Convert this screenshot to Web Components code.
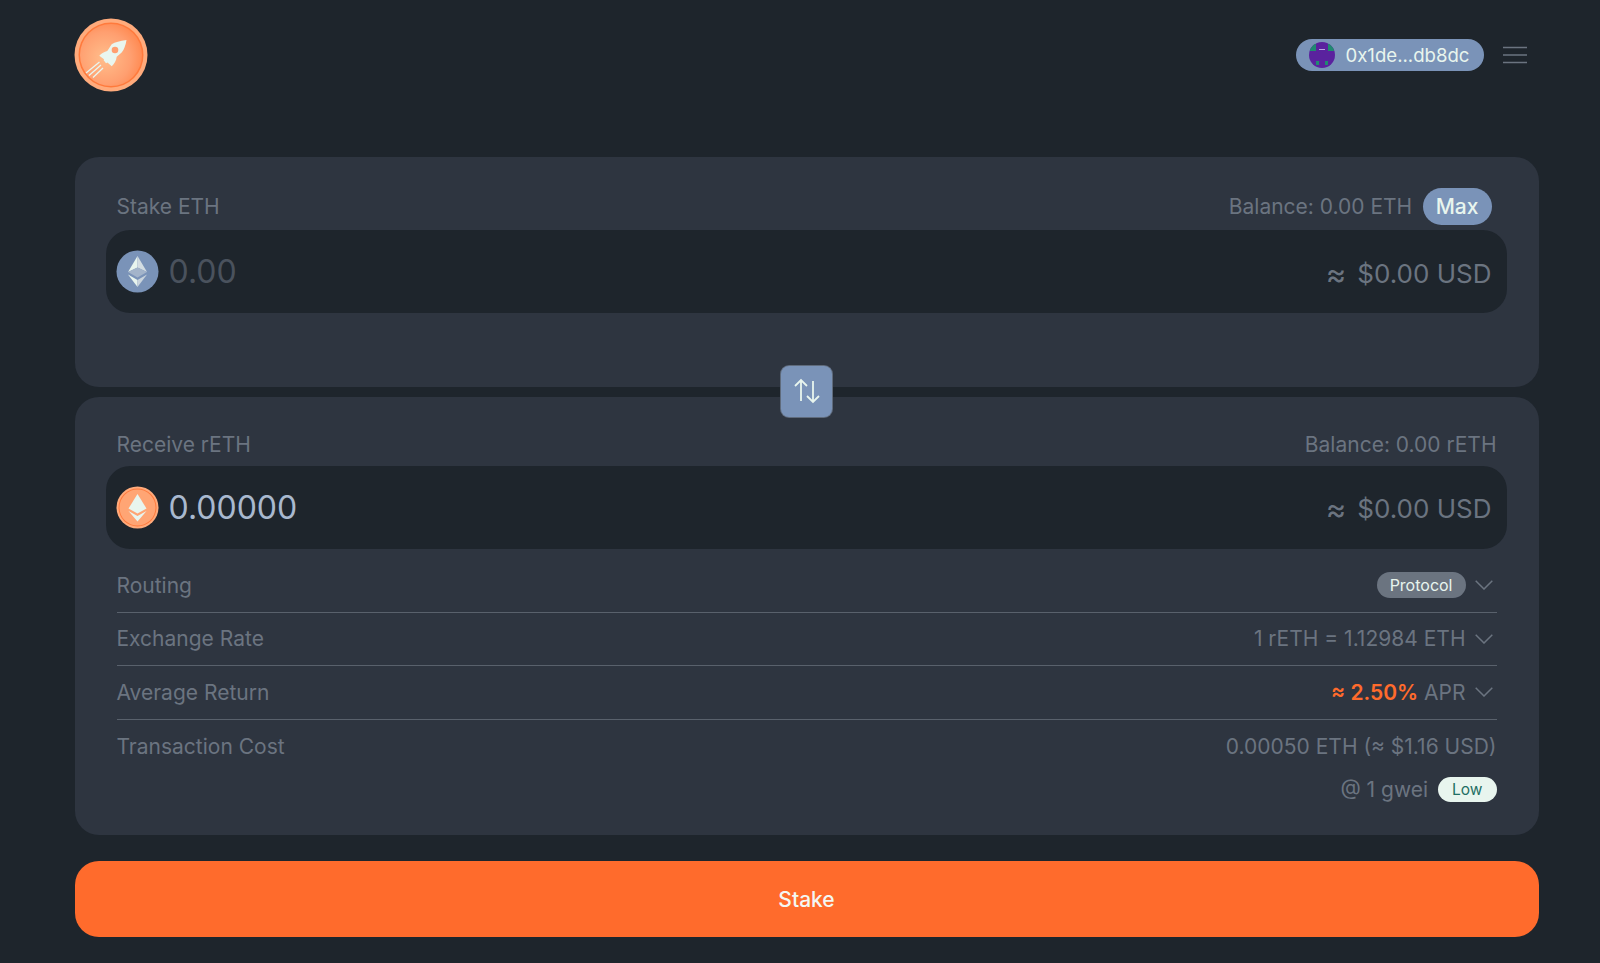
<!DOCTYPE html>
<html lang="en"><head><meta charset="utf-8"><title>Stake</title>
<style>
html,body{margin:0;height:100%;background:#1e252c}
body{font-family:Inter,"Liberation Sans",sans-serif;color:#6b7480}
</style></head>
<body>
<template id="t-app"><style>
:host{display:flex;flex-direction:column;height:963px;box-sizing:border-box;padding:18px 61.500px 0 74.500px;overflow:hidden}
.cards{display:flex;flex-direction:column;gap:10px;position:relative}
.swap{position:absolute;left:50%;top:208.500px;margin-left:-25.500px}
.cta{margin-top:26px}
</style>
<app-header></app-header>
<div class="cards">
<slot></slot>
<swap-button class="swap"></swap-button>
</div>
<cta-button class="cta">Stake</cta-button></template>

<template id="t-header"><style>
:host{display:flex;align-items:center;justify-content:space-between;height:74px;margin-bottom:65px;margin-left:-.5px;padding-right:12px}
.r{display:flex;align-items:center;gap:19px}
.pill{display:flex;align-items:center;gap:10px;height:32px;padding:0 14px 0 13px;border-radius:16px;background:#7a93b8;color:#e8f5ee;font-size:18.600px;box-sizing:border-box}
svg{display:block}
</style>
<svg width="74" height="74" viewBox="0 0 74 74"><defs>
<radialGradient id="g" cx="40%" cy="55%" r="60%"><stop offset="0" stop-color="#ffbe8c"/><stop offset=".7" stop-color="#ff9f70"/><stop offset="1" stop-color="#ff8c55"/></radialGradient></defs>
<circle cx="37" cy="37" r="36.500" fill="#ffab7c"/><circle cx="37" cy="37" r="32.500" fill="#ff7a3c"/><circle cx="37" cy="37" r="31" fill="url(#g)"/>
<path fill="#e9f6ef" d="M52.500 22C46 22.800 41 24.200 37.700 26.300L33.300 33C30.500 33.500 27.500 35.500 25.300 37.700L30 41.300L29.700 42.300L32 45.300L33.500 44.500L37.700 48.300C40 46 42.300 43 42.700 38.700C46.500 36 49.500 33 50.500 29.500C51.500 27 52.200 24.500 52.500 22Z"/>
<circle cx="41" cy="32" r="3.300" fill="#ff9f70"/>
<path stroke="#e9f6ef" stroke-width="1.300" fill="none" d="M12 55L25.500 44M15 57.500L27 47M19 59.500L29 50"/></svg>
<div class="r"><div class="pill">
<svg width="26" height="26" viewBox="0 0 26 26"><clipPath id="c"><circle cx="13" cy="13" r="13"/></clipPath><g clip-path="url(#c)"><rect width="26" height="26" fill="#5a229e"/><rect x="1" y="2" width="6" height="7" fill="#1f8a70"/><rect x="19" y="2" width="6" height="7" fill="#1f8a70"/><rect x="7" y="19" width="3" height="4" fill="#1f8a70"/><rect x="16" y="19" width="3" height="4" fill="#1f8a70"/><rect x="10" y="7" width="6" height="1" fill="#b9a3e0"/></g></svg>
<span>0x1de...db8dc</span></div>
<svg width="24" height="18" viewBox="0 0 24 18"><path d="M0 1.500H24M0 9H24M0 16.500H24" stroke="#6b7480" stroke-width="1.600"/></svg></div></template>

<template id="t-card"><style>
:host{display:block;background:#2e3540;border-radius:24px;padding:var(--pt,28.500px) 32px 16px 31px;box-sizing:border-box;height:var(--h,230px)}
.top{display:flex;justify-content:space-between;align-items:center;height:42px;margin-bottom:var(--mb,2.600px);padding:0 var(--rp,15px) 0 11px;font-size:21px;color:#6b7480;white-space:nowrap}
.r{display:flex;align-items:center;gap:10.500px}
.extra{padding:10.500px 10px 0 11px}
</style>
<div class="top"><span><slot name="label"></slot></span><span class="r"><slot name="balance"></slot></span></div>
<slot name="input"></slot>
<div class="extra"><slot></slot></div></template>

<template id="t-input"><style>
:host{display:flex;align-items:center;height:83px;background:#1e252c;border-radius:24px;padding:0 15px 0 10px;gap:10px;white-space:nowrap}
.v{flex:1;font-size:32px;color:var(--val,#4a525d)}
.u{font-size:26px;color:#6b7480;display:flex;align-items:center;gap:11px;padding-top:3px}
.a{font-size:31px;line-height:1}
::slotted(svg){display:block}
</style>
<slot name="icon"></slot><span class="v"><slot></slot></span><span class="u"><span class="a">≈</span><span>$0.00 USD</span></span></template>

<template id="t-row"><style>
:host{display:flex;align-items:center;justify-content:space-between;height:53.500px;box-sizing:border-box;border-bottom:1px solid #59616c;font-size:21px;color:#6b7480;white-space:nowrap}
:host([last]){border-bottom:0}
.r{display:flex;align-items:center;gap:9px}
svg{display:block;margin-right:4px}
svg[hidden]{display:none}
</style>
<span><slot name="label"></slot></span><span class="r"><slot></slot><svg id="ch" width="18" height="10" viewBox="0 0 18 10" fill="none"><path d="M.7 .7L9 9L17.300 .7" stroke="#6b7480" stroke-width="1.500"/></svg></span></template>

<template id="t-pill"><style>
:host{display:inline-flex;align-items:center;justify-content:center;border-radius:20px;background:var(--bg,#6b7480);color:var(--fg,#e8f5ee);height:var(--ht,26px);padding:0 var(--px,13px);font-size:var(--fs,16px);font-weight:var(--fw,400);box-sizing:border-box}
</style><slot></slot></template>

<template id="t-swap"><style>
:host{display:flex;align-items:center;justify-content:center;width:51px;height:51px;border-radius:8px;background:#7a93b8;box-shadow:0 0 0 1px #5f6b7c}
</style><svg width="26" height="26" viewBox="0 0 26 26" fill="none" stroke="#e8f5ee" stroke-width="1.800"><path d="M7 23V2M1 8L7 2L13 8M19 3V24M13 18L19 24L25 18"/></svg></template>

<template id="t-cta"><style>
:host{display:flex;align-items:center;justify-content:center;height:76px;border-radius:24px;background:#ff6b2c;color:#f4f7f3;font-size:21px;font-weight:500}
</style><slot></slot></template>

<stake-app>
<stake-card style="--h:230px">
  <span slot="label">Stake ETH</span>
  <span slot="balance">Balance: 0.00 ETH</span>
  <token-pill slot="balance" style="--bg:#7a93b8;--ht:37px;--fs:21px;--fw:500">Max</token-pill>
  <token-input slot="input">
    <svg slot="icon" width="43" height="43" viewBox="0 0 43 43"><circle cx="21.500" cy="21.500" r="21" fill="#7a93b8"/><path fill="#e8f5ee" d="M21.500 6L12 22L21.500 17.500Z"/><path fill="#d3dde2" d="M21.500 6V17.500L31 22Z"/><path fill="#a3b4ca" d="M21.500 17.500L12 22L21.500 27.500L31 22Z"/><path fill="#e8f5ee" d="M12 24.500L21.500 37V30Z"/><path fill="#c9d4dd" d="M31 24.500L21.500 37V30Z"/></svg>
    0.00
  </token-input>
</stake-card>
<stake-card style="--h:438px;--pt:26px;--mb:.6px;--rp:10px">
  <span slot="label">Receive rETH</span>
  <span slot="balance">Balance: 0.00 rETH</span>
  <token-input slot="input" style="--val:#a9b9cf">
    <svg slot="icon" width="43" height="43" viewBox="0 0 43 43"><circle cx="21.500" cy="21.500" r="21" fill="#ffab7c"/><circle cx="21.500" cy="21.500" r="19" fill="#ff7a3c"/><circle cx="21.500" cy="21.500" r="18" fill="#ffa574"/><path fill="#e8f5ee" d="M21.500 8L12.500 22.500L21.500 27.500L30.500 22.500Z"/><path fill="#e8f5ee" d="M12.500 25L21.500 35.500L30.500 25L21.500 30Z"/></svg>
    0.00000
  </token-input>
  <info-row><span slot="label">Routing</span><token-pill>Protocol</token-pill></info-row>
  <info-row><span slot="label">Exchange Rate</span>1 rETH = 1.12984 ETH</info-row>
  <info-row><span slot="label">Average Return</span><span><b style="color:#ff6b2c;font-weight:600">≈ 2.50%</b> APR</span></info-row>
  <info-row last no-chevron><span slot="label">Transaction Cost</span>0.00050 ETH (≈ $1.16 USD)</info-row>
  <gas-line>@ 1 gwei<token-pill style="--bg:#e8f5ee;--fg:#1f6f63;--px:14px;--fs:15.500px;--ht:25px">Low</token-pill></gas-line>
</stake-card>
</stake-app>

<script>
function def(name,tid,init){customElements.define(name,class extends HTMLElement{
  constructor(){super();this.attachShadow({mode:'open'}).appendChild(document.getElementById(tid).content.cloneNode(true));}
  connectedCallback(){init&&init(this);}
});}
def('stake-app','t-app');
def('app-header','t-header');
def('stake-card','t-card');
def('token-input','t-input');
def('info-row','t-row',el=>{if(el.hasAttribute('no-chevron'))el.shadowRoot.getElementById('ch').setAttribute('hidden','');});
def('token-pill','t-pill');
def('swap-button','t-swap');
def('cta-button','t-cta');
customElements.define('gas-line',class extends HTMLElement{constructor(){super();this.attachShadow({mode:'open'}).innerHTML='<style>:host{display:flex;justify-content:flex-end;align-items:center;gap:10px;font-size:21px;color:#6b7480;margin-top:3.5px;white-space:nowrap}</style><slot></slot>';}});
</script>
</body></html>
